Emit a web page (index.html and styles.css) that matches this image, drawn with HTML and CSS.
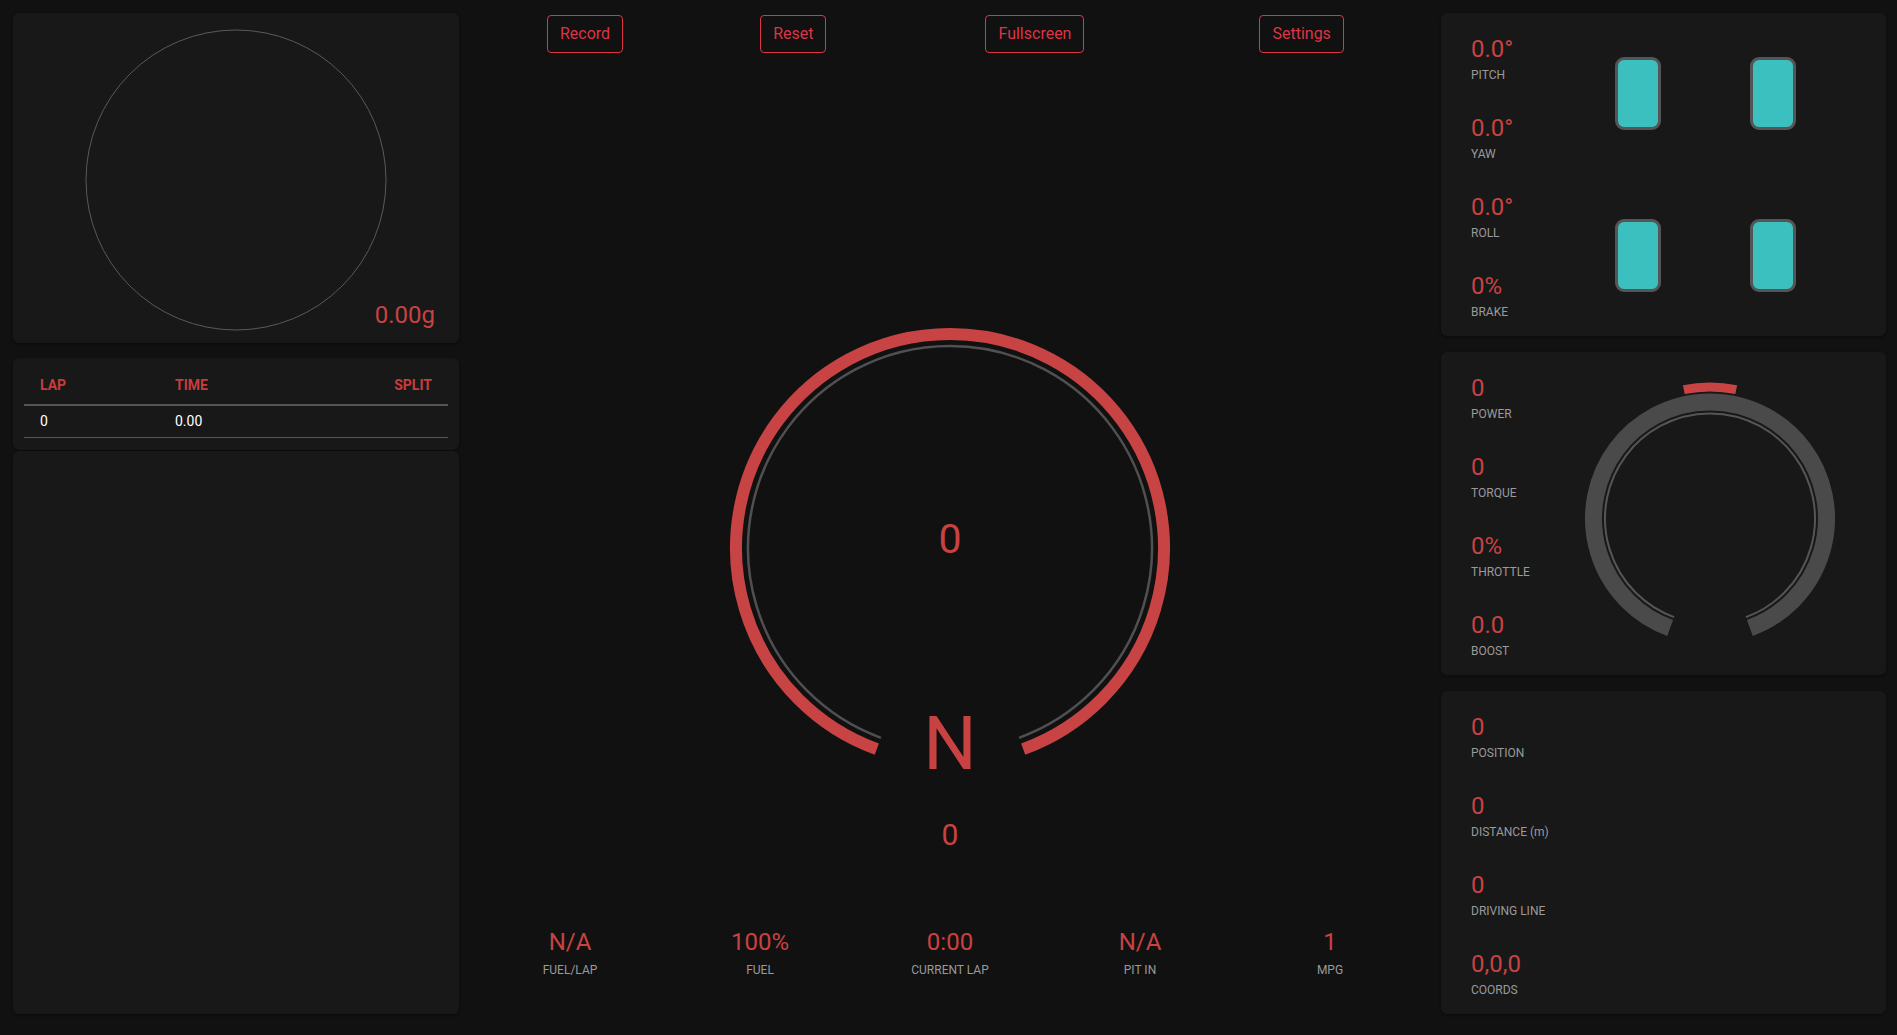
FILE: index.html
```html
<!DOCTYPE html>
<html lang="en">
<head>
<meta charset="utf-8">
<title>Telemetry Dashboard</title>
<link rel="stylesheet" href="styles.css">
</head>
<body>
<div class="app">
  <div class="col-left">
    <div class="panel gforce">
      <svg class="gforce-svg" width="302" height="302" viewBox="0 0 302 302">
        <circle cx="151" cy="151" r="150" fill="none" stroke="#5a5a5a" stroke-width="1"/>
      </svg>
      <div class="gforce-value">0.00g</div>
    </div>
    <div class="panel laps">
      <table class="lap-table">
        <colgroup><col class="c1"><col class="c2"><col></colgroup>
        <thead>
          <tr><th>LAP</th><th>TIME</th><th class="right">SPLIT</th></tr>
        </thead>
        <tbody>
          <tr><td>0</td><td>0.00</td><td></td></tr>
        </tbody>
      </table>
    </div>
    <div class="panel track"></div>
  </div>

  <div class="col-center">
    <div class="toolbar">
      <button class="btn b1">Record</button>
      <button class="btn b2">Reset</button>
      <button class="btn b3">Fullscreen</button>
      <button class="btn b4">Settings</button>
    </div>
    <div class="dial">
      <svg width="460" height="540" viewBox="0 0 460 540">
        <path d="M 156.808 431.094 A 214 214 0 1 1 303.192 431.094" fill="none" stroke="#c84444" stroke-width="12"/>
        <path d="M 160.912 419.818 A 202 202 0 1 1 299.088 419.818" fill="none" stroke="#505050" stroke-width="2.5"/>
        <text x="230" y="235" class="dial-speed" text-anchor="middle">0</text>
        <text x="230" y="451" class="dial-gear" text-anchor="middle">N</text>
        <text x="230" y="527" class="dial-rpm" text-anchor="middle">0</text>
      </svg>
    </div>
    <div class="stats-row">
      <div class="stat"><div class="val">N/A</div><div class="lbl">FUEL/LAP</div></div>
      <div class="stat"><div class="val">100%</div><div class="lbl">FUEL</div></div>
      <div class="stat"><div class="val">0:00</div><div class="lbl">CURRENT LAP</div></div>
      <div class="stat"><div class="val">N/A</div><div class="lbl">PIT IN</div></div>
      <div class="stat"><div class="val">1</div><div class="lbl">MPG</div></div>
    </div>
  </div>

  <div class="col-right">
    <div class="panel info">
      <div class="info-stats">
        <div class="item"><div class="val">0.0°</div><div class="lbl">PITCH</div></div>
        <div class="item"><div class="val">0.0°</div><div class="lbl">YAW</div></div>
        <div class="item"><div class="val">0.0°</div><div class="lbl">ROLL</div></div>
        <div class="item"><div class="val">0%</div><div class="lbl">BRAKE</div></div>
      </div>
      <div class="visual">
        <div class="tires">
          <div class="tire"></div>
          <div class="tire"></div>
          <div class="tire"></div>
          <div class="tire"></div>
        </div>
      </div>
    </div>
    <div class="panel info">
      <div class="info-stats">
        <div class="item"><div class="val">0</div><div class="lbl">POWER</div></div>
        <div class="item"><div class="val">0</div><div class="lbl">TORQUE</div></div>
        <div class="item"><div class="val">0%</div><div class="lbl">THROTTLE</div></div>
        <div class="item"><div class="val">0.0</div><div class="lbl">BOOST</div></div>
      </div>
      <div class="visual">
        <svg width="252" height="280" viewBox="0 0 252 280">
          <path d="M 86.155 253.974 A 116.5 116.5 0 1 1 165.845 253.974" fill="none" stroke="#4a4a4a" stroke-width="17"/>
          <path d="M 90.088 243.168 A 105 105 0 1 1 161.912 243.168" fill="none" stroke="#555555" stroke-width="2"/>
          <path d="M 99.783 15.64 A 131.5 131.5 0 0 1 152.217 15.64" fill="none" stroke="#c84444" stroke-width="9"/>
        </svg>
      </div>
    </div>
    <div class="panel info">
      <div class="info-stats">
        <div class="item"><div class="val">0</div><div class="lbl">POSITION</div></div>
        <div class="item"><div class="val">0</div><div class="lbl">DISTANCE (m)</div></div>
        <div class="item"><div class="val">0</div><div class="lbl">DRIVING LINE</div></div>
        <div class="item"><div class="val">0,0,0</div><div class="lbl">COORDS</div></div>
      </div>
    </div>
  </div>
</div>
</body>
</html>
```

FILE: styles.css
```css
html, body {
  margin: 0;
  padding: 0;
  background: #111111;
  font-family: Roboto, "Noto Sans", "Liberation Sans", sans-serif;
  overflow: hidden;
}

.app {
  box-sizing: border-box;
  height: 1035px;
  display: grid;
  grid-template-columns: 446px 1fr 445px;
  padding: 13px 11px 21px 13px;
}

.panel {
  background: #181818;
  border-radius: 6px;
  box-shadow: 0 1px 3px rgba(0, 0, 0, 0.45);
}

/* left column */
.col-left {
  display: flex;
  flex-direction: column;
  min-height: 0;
}

.gforce {
  box-sizing: border-box;
  height: 330px;
  display: grid;
  padding: 16px 24px 12px;
}

.gforce-svg {
  grid-area: 1 / 1;
  justify-self: center;
  display: block;
}

.gforce-value {
  grid-area: 1 / 1;
  justify-self: end;
  align-self: end;
  margin-bottom: 2px;
  color: #c94242;
  font-size: 24px;
  line-height: 28px;
}

.laps {
  box-sizing: border-box;
  height: 92px;
  margin-top: 15px;
  padding: 9px 11px 0;
}

.lap-table {
  width: 100%;
  border-collapse: collapse;
  table-layout: fixed;
  font-size: 14px;
  line-height: 21px;
}

.lap-table .c1 { width: 135px; }
.lap-table .c2 { width: 150px; }

.lap-table th {
  color: #c63d3d;
  font-weight: 700;
  text-align: left;
  padding: 8px 16px;
  border-bottom: 2px solid #555555;
}

.lap-table th.right { text-align: right; }

.lap-table td {
  color: #ffffff;
  padding: 5px 16px;
  border-bottom: 1px solid #555555;
}

.track {
  flex: 1;
  margin-top: 1px;
}

/* center column */
.col-center {
  display: flex;
  flex-direction: column;
  padding: 0 16px;
}

.toolbar {
  display: flex;
  margin-top: 2px;
  padding-left: 72px;
}

.btn {
  font-family: Roboto, "Noto Sans", sans-serif;
  font-size: 16px;
  line-height: 24px;
  padding: 6px 12px;
  background: transparent;
  color: #dc3545;
  border: 1px solid #dc3545;
  border-radius: 4px;
}

.b2 { margin-left: 137px; }
.b3 { margin-left: 159px; }
.b4 { margin-left: 175px; }

.dial {
  margin-top: 265px;
  display: flex;
  justify-content: center;
}

.dial svg { display: block; }

.dial-speed {
  font-family: Roboto, "Noto Sans", sans-serif;
  font-size: 41px;
  fill: #c94242;
}

.dial-gear {
  font-family: Roboto, "Noto Sans", sans-serif;
  font-size: 75px;
  fill: #c94242;
}

.dial-rpm {
  font-family: Roboto, "Noto Sans", sans-serif;
  font-size: 30px;
  fill: #c94242;
}

.stats-row {
  display: grid;
  grid-template-columns: repeat(5, 1fr);
  margin-top: 70px;
  text-align: center;
}

.val {
  color: #c94242;
  font-size: 24px;
  line-height: 28px;
}

.lbl {
  color: #9a9a9a;
  font-size: 12px;
  line-height: 16px;
}

.stat .lbl { margin-top: 6px; }

/* right column */
.col-right {
  display: flex;
  flex-direction: column;
  gap: 16px;
  min-height: 0;
}

.info {
  flex: 1;
  display: flex;
  min-height: 0;
}

.info-stats {
  box-sizing: border-box;
  flex: 0 0 140px;
  width: 140px;
  padding: 22px 0 0 30px;
  display: flex;
  flex-direction: column;
  gap: 31px;
}

.info-stats .lbl { margin-top: 4px; }

.visual {
  flex: 1;
  min-width: 0;
  display: flex;
  align-items: center;
  justify-content: center;
  padding-right: 48px;
}

.visual svg { display: block; }

.tires {
  display: grid;
  grid-template-columns: 46px 46px;
  grid-auto-rows: 73px;
  gap: 89px;
  margin-right: 8px;
}

.tire {
  box-sizing: border-box;
  background: #3bbfbf;
  border: 3px solid #555555;
  border-radius: 9px;
}
```
